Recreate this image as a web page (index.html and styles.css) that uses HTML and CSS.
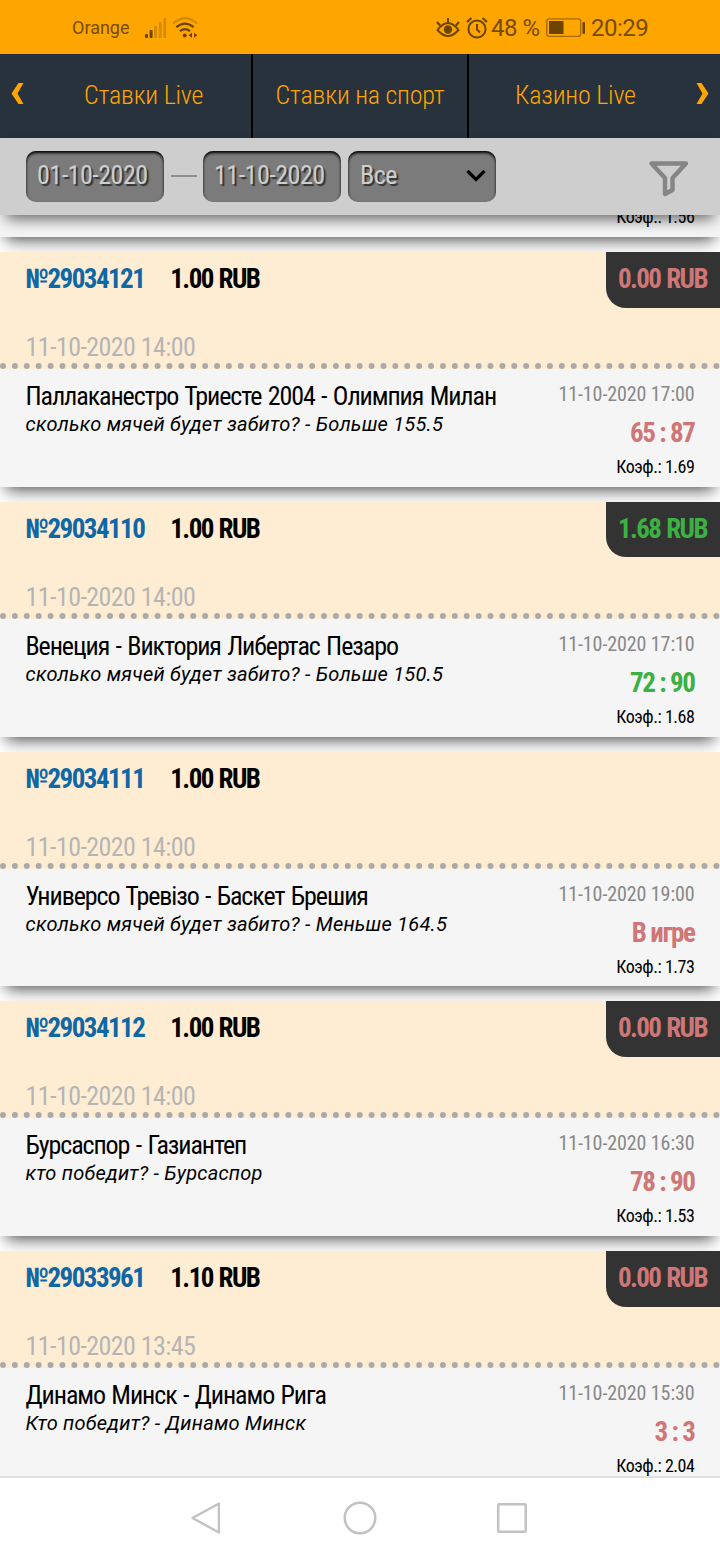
FILE: index.html
```html
<!DOCTYPE html>
<html lang="ru">
<head>
  <meta charset="UTF-8">
  <meta name="viewport" content="width=device-width, initial-scale=1.0">
  <title>История ставок</title>
  <link rel="stylesheet" href="styles.css">
</head>
<body>
  <div class="status">
    <span class="carrier">Orange</span>
    <svg class="signal" width="22" height="22" viewBox="0 0 22 22">
      <g fill="#6b4500">
        <rect x="0" y="17" width="3" height="4" rx="1"/>
        <rect x="4.6" y="13" width="3" height="8" rx="1"/>
      </g>
      <g fill="#d68b02">
        <rect x="9.2" y="9" width="2.8" height="12"/>
        <rect x="13.8" y="5" width="2.8" height="16"/>
        <rect x="18.4" y="1" width="2.8" height="20"/>
      </g>
    </svg>
    <svg class="wifi" width="26" height="22" viewBox="0 0 26 22" fill="none" stroke="#6b4500" stroke-width="2.2">
      <path d="M.8 6.5Q13-4 25.2 6.5" stroke="#d68b02"/>
      <path d="M4.3 10.2Q13 3 21.7 10.2M8 14.2Q13 10 18 14.2"/>
      <circle cx="12.7" cy="18.6" r="2" fill="#6b4500" stroke="none"/>
      <path d="M20 15.8v5l-3.5-2.5zM22 15.8v5l3.5-2.5z" fill="#6b4500" stroke="none"/>
    </svg>
    <svg class="eye" width="24" height="22" viewBox="0 0 24 22" fill="none" stroke="#6b4500" stroke-width="2">
      <path d="M1.5 13Q12-1 22.5 13Q12 25 1.5 13zM12 1v5M1 5l3 3.5M23 5l-3 3.5"/>
      <circle cx="12" cy="12.5" r="4.2" fill="#6b4500" stroke="none"/>
    </svg>
    <svg class="alarm" width="22" height="22" viewBox="0 0 22 22" fill="none" stroke="#6b4500" stroke-width="2">
      <circle cx="11" cy="12" r="8.6"/>
      <path d="M11 7v5.5l3 3M1 5l4.5-4M21 5l-4.5-4"/>
    </svg>
    <span class="percent">48 %</span>
    <svg class="battery" width="40" height="20" viewBox="0 0 40 20">
      <rect x=".7" y=".9" width="34" height="17.5" rx="2.5" fill="none" stroke="#a66c02" stroke-width="1.4"/>
      <rect x="3" y="3" width="14.5" height="13" fill="#6b4500"/>
      <rect x="36.5" y="4" width="2.5" height="12" rx="1" fill="#6b4500"/>
    </svg>
    <span class="time">20:29</span>
  </div>

  <div class="tabs">
    <a class="tab tab-first"><svg class="arrow" width="13" height="21" viewBox="0 0 13 21"><path d="M7.5 0H12.5L6.5 10.5L12.5 21H7.5L.5 10.5z"/></svg><span>Ставки Live</span></a>
    <a class="tab tab-mid"><span>Ставки на спорт</span></a>
    <a class="tab tab-last"><span>Казино Live</span><svg class="arrow" width="13" height="21" viewBox="0 0 13 21"><path d="M5.5 0H.5L6.5 10.5L.5 21H5.5L12.5 10.5z"/></svg></a>
  </div>

  <div class="filters">
    <div class="field">01-10-2020</div>
    <div class="dash"></div>
    <div class="field">11-10-2020</div>
    <div class="field select">Все
      <svg width="20" height="14" viewBox="0 0 20 14"><path d="M1.5 2L10 10.5L18.5 2" fill="none" stroke="#000" stroke-width="3.2"/></svg>
    </div>
    <svg class="funnel" width="40" height="36" viewBox="0 0 40 36"><path d="M2.5 2.5H37L23.5 17V29L16 33V17z" fill="none" stroke="#858585" stroke-width="4.4" stroke-linejoin="round"/></svg>
  </div>

  <div class="list">
    <div class="card card-cut">
      <div class="card-head"></div>
      <div class="card-body">
        <div class="game"></div>
        <div class="result">
          <div class="date"></div>
          <div class="score lose"></div>
          <div class="coef">Коэф.: 1.56</div>
        </div>
      </div>
    </div>

    <div class="card">
      <div class="card-head">
        <div class="bet"><span class="num">№29034121</span><span>1.00 RUB</span></div>
        <div class="created">11-10-2020 14:00</div>
        <div class="payout lose">0.00 RUB</div>
      </div>
      <div class="card-body">
        <div class="game">
          <div class="teams">Паллаканестро Триесте 2004 - Олимпия Милан</div>
          <div class="pick">сколько мячей будет забито? - Больше 155.5</div>
        </div>
        <div class="result">
          <div class="date">11-10-2020 17:00</div>
          <div class="score lose">65 : 87</div>
          <div class="coef">Коэф.: 1.69</div>
        </div>
      </div>
    </div>

    <div class="card">
      <div class="card-head">
        <div class="bet"><span class="num">№29034110</span><span>1.00 RUB</span></div>
        <div class="created">11-10-2020 14:00</div>
        <div class="payout win">1.68 RUB</div>
      </div>
      <div class="card-body">
        <div class="game">
          <div class="teams">Венеция - Виктория Либертас Пезаро</div>
          <div class="pick">сколько мячей будет забито? - Больше 150.5</div>
        </div>
        <div class="result">
          <div class="date">11-10-2020 17:10</div>
          <div class="score win">72 : 90</div>
          <div class="coef">Коэф.: 1.68</div>
        </div>
      </div>
    </div>

    <div class="card">
      <div class="card-head">
        <div class="bet"><span class="num">№29034111</span><span>1.00 RUB</span></div>
        <div class="created">11-10-2020 14:00</div>
      </div>
      <div class="card-body">
        <div class="game">
          <div class="teams">Универсо Тревізо - Баскет Брешия</div>
          <div class="pick">сколько мячей будет забито? - Меньше 164.5</div>
        </div>
        <div class="result">
          <div class="date">11-10-2020 19:00</div>
          <div class="score lose">В игре</div>
          <div class="coef">Коэф.: 1.73</div>
        </div>
      </div>
    </div>

    <div class="card">
      <div class="card-head">
        <div class="bet"><span class="num">№29034112</span><span>1.00 RUB</span></div>
        <div class="created">11-10-2020 14:00</div>
        <div class="payout lose">0.00 RUB</div>
      </div>
      <div class="card-body">
        <div class="game">
          <div class="teams">Бурсаспор - Газиантеп</div>
          <div class="pick">кто победит? - Бурсаспор</div>
        </div>
        <div class="result">
          <div class="date">11-10-2020 16:30</div>
          <div class="score lose">78 : 90</div>
          <div class="coef">Коэф.: 1.53</div>
        </div>
      </div>
    </div>

    <div class="card">
      <div class="card-head">
        <div class="bet"><span class="num">№29033961</span><span>1.10 RUB</span></div>
        <div class="created">11-10-2020 13:45</div>
        <div class="payout lose">0.00 RUB</div>
      </div>
      <div class="card-body">
        <div class="game">
          <div class="teams">Динамо Минск - Динамо Рига</div>
          <div class="pick">Кто победит? - Динамо Минск</div>
        </div>
        <div class="result">
          <div class="date">11-10-2020 15:30</div>
          <div class="score lose">3 : 3</div>
          <div class="coef">Коэф.: 2.04</div>
        </div>
      </div>
    </div>
  </div>

  <div class="navbar">
    <svg width="30" height="36" viewBox="0 0 30 36"><path d="M29 3.5V32.5L2.5 18z"/></svg>
    <svg class="home" width="36" height="36" viewBox="0 0 36 36"><circle cx="18" cy="18" r="15.3"/></svg>
    <svg width="32" height="36" viewBox="0 0 32 36"><rect x="2.2" y="4.2" width="27.5" height="27.5" rx="1"/></svg>
  </div>
</body>
</html>
```
FILE: styles.css
```css
* {
  box-sizing: border-box;
}
body {
  margin: 0;
  width: 720px;
  height: 1560px;
  overflow: hidden;
  display: flex;
  flex-direction: column;
  background: #fff;
  font-family: "Roboto Condensed", Roboto, sans-serif;
  font-stretch: 75%;
  color: #000;
}
svg {
  display: block;
  flex: none;
}
.status {
  height: 54px;
  flex: none;
  display: flex;
  align-items: center;
  padding: 1px 0 0 72px;
  background: #ffa500;
  color: #754c00;
  font-family: Roboto, sans-serif;
  font-stretch: 100%;
  font-size: 24px;
  letter-spacing: -0.5px;
  white-space: nowrap;
}
.carrier {
  width: 73px;
  font-size: 18px;
  letter-spacing: 0;
}
.signal {
  margin-right: 5px;
}
.eye {
  margin-left: 238px;
  margin-right: 6px;
}
.alarm {
  margin-right: 3px;
}
.percent {
  width: 55px;
}
.battery {
  margin-right: 5px;
}

.tabs {
  height: 84px;
  flex: none;
  display: flex;
  background: #28323c;
  color: #ffa500;
  font-size: 26px;
  font-weight: 300;
  letter-spacing: -0.2px;
}
.tab {
  display: flex;
  align-items: center;
  justify-content: center;
  padding-bottom: 2px;
  border-right: 2px solid #000;
  white-space: nowrap;
}
.tab-first {
  width: 253px;
  padding-left: 11px;
  justify-content: flex-start;
  gap: 60px;
}
.tab-mid {
  width: 216px;
}
.tab-last {
  width: 251px;
  border: 0;
  padding-left: 46px;
  padding-right: 11px;
  justify-content: space-between;
}
.arrow {
  fill: #ffa500;
  margin-bottom: 4px;
}

.filters {
  position: relative;
  z-index: 2;
  height: 77px;
  flex: none;
  display: flex;
  padding: 13px 31px 0 26px;
  background: #cecece;
  box-shadow: 0 10px 14px -6px rgba(0, 0, 0, 0.6);
}
.field {
  width: 138px;
  height: 51px;
  padding-left: 11px;
  line-height: 49px;
  border-radius: 10px;
  background: #7b7b7b;
  color: #cecece;
  font-size: 26px;
  letter-spacing: -0.5px;
  text-shadow: 2px 2px 1px #333;
  box-shadow: inset 0 2px 3px #000;
  white-space: nowrap;
}
.dash {
  width: 26px;
  height: 2px;
  margin: 24px 6px 0 7px;
  background: #909090;
}
.select {
  width: 148px;
  margin-left: 7px;
  padding: 0 10px 2px 12px;
  display: flex;
  align-items: center;
  justify-content: space-between;
}
.funnel {
  margin: 10px 0 0 auto;
}

.list {
  flex: 1;
  min-height: 0;
  overflow: hidden;
}
.card {
  margin-bottom: 15px;
  box-shadow: 0 9px 15px -6px rgba(0, 0, 0, 0.7);
}
.card-cut {
  margin-top: -212.75px;
}
.card-head {
  position: relative;
  height: 117px;
  padding: 9px 25.5px 0;
  border-bottom: 6px dotted #aaa;
  background: #ffedd3;
}
.bet {
  display: flex;
  gap: 26px;
  height: 68px;
  line-height: 36px;
  font-size: 27px;
  font-weight: bold;
  letter-spacing: -1.55px;
  word-spacing: 1px;
}
.num {
  color: #0f67a6;
}
.created {
  line-height: 36px;
  font-size: 26px;
  letter-spacing: -0.57px;
  color: #b5b5b5;
}
.payout {
  position: absolute;
  top: 0;
  right: 0;
  width: 114px;
  height: 55.5px;
  padding-right: 13px;
  line-height: 54px;
  text-align: right;
  font-size: 27px;
  font-weight: bold;
  letter-spacing: -1.55px;
  word-spacing: 1px;
  background: #333;
  border-bottom-left-radius: 20px;
}
.card-body {
  height: 117.75px;
  display: flex;
  justify-content: space-between;
  padding: 10px 25.5px 0;
  background: #f5f5f5;
  white-space: nowrap;
}
.teams {
  line-height: 34px;
  font-size: 26px;
  letter-spacing: -1.08px;
  word-spacing: 1.5px;
}
.pick {
  line-height: 22px;
  font-family: Roboto, sans-serif;
  font-stretch: 100%;
  font-size: 20px;
  font-style: italic;
  letter-spacing: 0.23px;
}
.result {
  text-align: right;
}
.date {
  height: 36px;
  line-height: 30px;
  font-size: 20px;
  letter-spacing: -0.1px;
  color: #888;
}
.score {
  height: 36px;
  line-height: 37px;
  font-size: 27px;
  font-weight: bold;
  letter-spacing: -1.4px;
}
.coef {
  line-height: 31px;
  font-size: 18px;
  letter-spacing: -0.45px;
}
.lose {
  color: #cf7676;
}
.win {
  color: #3cb043;
}

.navbar {
  height: 84px;
  flex: none;
  display: flex;
  padding: 22px 0 0 190px;
  border-top: 2px solid #e0e0e0;
  background: #fff;
}
.home {
  margin: 0 118px 0 122px;
}
.navbar svg {
  fill: none;
  stroke: #c2c2c2;
  stroke-width: 2.5;
  stroke-linejoin: round;
}
```
